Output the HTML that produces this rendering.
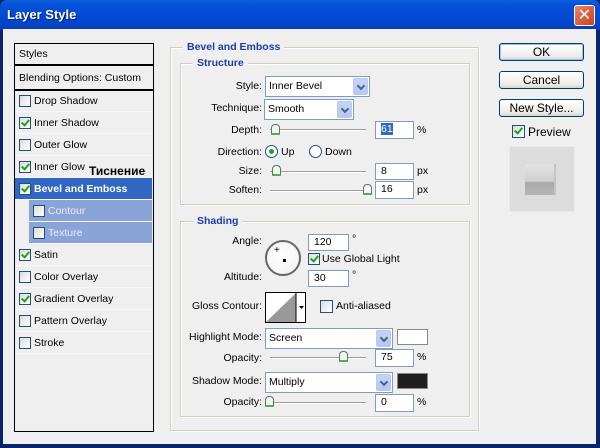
<!DOCTYPE html>
<html><head><meta charset="utf-8"><style>
*{margin:0;padding:0;box-sizing:border-box}
body{width:600px;height:448px;overflow:hidden;font:10.5px "Liberation Sans","DejaVu Sans",sans-serif;color:#000;background:#0a246a;position:relative}
.a{position:absolute}
.lbl{position:absolute;text-align:right;width:120px;white-space:nowrap;line-height:13px}
.t{position:absolute;white-space:nowrap;line-height:13px}
.inp{position:absolute;background:#fff;border:1px solid #7f9db9;padding-left:5px;line-height:15px;font-size:10.5px}
.sel{position:absolute;background:#fff;border:1px solid #7f9db9;padding-left:3px;font-size:10.5px}
.dd{position:absolute;right:1px;top:1px;bottom:1px;width:15px;background:linear-gradient(#c6d3f7,#b5c8f3);border:1px solid #b9c9ef;border-radius:2px}
.dd:after{content:"";position:absolute;left:4px;top:4px;width:4px;height:4px;border-right:2px solid #4d6185;border-bottom:2px solid #4d6185;transform:rotate(45deg)}
.track{position:absolute;height:2px;border-top:1px solid #9d9d9d;border-bottom:1px solid #fff}
.thumb{position:absolute;width:9px;height:11px;background:#f4f4f4;border:1px solid #5a7a5a;border-radius:4px 4px 1px 1px;border-bottom:2px solid #4bb34b}
.cb{position:absolute;width:12px;height:12px;border:1px solid #1c5180;background:linear-gradient(135deg,#dcdcd6,#fff)}
.ck:after{content:"";position:absolute;left:3px;top:0px;width:3px;height:6px;border-right:2px solid #21a121;border-bottom:2px solid #21a121;transform:rotate(40deg)}
.row{position:absolute;left:15px;width:137px;height:22px;border-bottom:1px solid #f8f8f8;}
.row .cb{left:4px;top:5px}
.row span{position:absolute;left:19px;top:5px;white-space:nowrap}
.gb{position:absolute;border:1px solid #d0d0bf;box-shadow:inset 1px 1px 0 #fff,1px 1px 0 #fff}
.gt{position:absolute;background:#efefef;color:#1c3ca6;font-weight:bold;padding:0 4px;line-height:13px}
.btn{position:absolute;left:499px;width:85px;height:18px;border:1px solid #003c74;border-radius:3px;background:linear-gradient(#fff,#ecebe6 80%,#d6d0c5);text-align:center;line-height:16px;font-size:12px}
</style></head><body>
<div class="a" style="left:0;top:0;width:600px;height:30px;background:linear-gradient(#0a5fdc,#0550d8 20%,#0047d0 70%,#0a3fae);border-radius:7px 7px 0 0"></div>
<div class="t" style="left:7px;top:8px;color:#fff;font-size:13px;font-weight:bold;text-shadow:1px 1px #0a1e6a">Layer Style</div>
<div class="a" style="left:574px;top:5px;width:21px;height:21px;border:1px solid #fff;border-radius:3px;background:linear-gradient(135deg,#e8866a,#c8401c);color:#fff;font-size:16px;font-weight:bold;text-align:center;line-height:19px">✕</div>
<div class="a" style="left:3px;top:29px;width:593px;height:415px;background:#efefef"></div>

<div class="a" style="left:14px;top:43px;width:140px;height:389px;border:1px solid #000;background:#efefef"></div>
<div class="t" style="left:19px;top:48px">Styles</div>
<div class="a" style="left:15px;top:64px;width:138px;height:2px;background:#000"></div>
<div class="t" style="left:19px;top:72px">Blending Options: Custom</div>
<div class="a" style="left:15px;top:89px;width:138px;height:2px;background:#000"></div>
<div class="row" style="top:90px"><div class="cb"></div><span>Drop Shadow</span></div>
<div class="row" style="top:112px"><div class="cb ck"></div><span>Inner Shadow</span></div>
<div class="row" style="top:134px"><div class="cb"></div><span>Outer Glow</span></div>
<div class="row" style="top:156px"><div class="cb ck"></div><span>Inner Glow</span></div>
<div class="t" style="left:89px;top:165px;font-weight:bold;font-size:12px">Тиснение</div>
<div class="row" style="top:178px;background:#3166c2;color:#fff;font-weight:bold"><div class="cb ck"></div><span>Bevel and Emboss</span></div>
<div class="row" style="top:200px;left:29px;width:123px;background:#8aa4d8;color:#e8eefa"><div class="cb"></div><span>Contour</span></div>
<div class="row" style="top:222px;left:29px;width:123px;background:#8aa4d8;color:#e8eefa"><div class="cb"></div><span>Texture</span></div>
<div class="row" style="top:244px"><div class="cb ck"></div><span>Satin</span></div>
<div class="row" style="top:266px"><div class="cb"></div><span>Color Overlay</span></div>
<div class="row" style="top:288px"><div class="cb ck"></div><span>Gradient Overlay</span></div>
<div class="row" style="top:310px"><div class="cb"></div><span>Pattern Overlay</span></div>
<div class="row" style="top:332px"><div class="cb"></div><span>Stroke</span></div>

<div class="gb" style="left:170px;top:47px;width:309px;height:384px"></div>
<div class="gt" style="left:183px;top:41px">Bevel and Emboss</div>
<div class="gb" style="left:180px;top:63px;width:290px;height:142px"></div>
<div class="gt" style="left:193px;top:57px">Structure</div>
<div class="gb" style="left:180px;top:221px;width:290px;height:196px"></div>
<div class="gt" style="left:193px;top:215px">Shading</div>

<div class="lbl" style="left:142px;top:80px">Style:</div>
<div class="sel" style="left:265px;top:76px;width:105px;height:21px;line-height:19px">Inner Bevel<div class="dd"></div></div>
<div class="lbl" style="left:142px;top:102px">Technique:</div>
<div class="sel" style="left:264px;top:99px;width:90px;height:21px;line-height:19px">Smooth<div class="dd"></div></div>
<div class="lbl" style="left:142px;top:124px">Depth:</div>
<div class="track" style="left:270px;top:129px;width:96px"></div>
<div class="thumb" style="left:271px;top:124px"></div>
<div class="inp" style="left:375px;top:121px;width:39px;height:18px"><span style="background:#316ac5;color:#fff">61</span></div>
<div class="t" style="left:417px;top:124px">%</div>
<div class="lbl" style="left:142px;top:146px">Direction:</div>
<div class="a" style="left:265px;top:145px;width:13px;height:13px;border:1px solid #1c5180;border-radius:50%;background:#fff"></div>
<div class="a" style="left:269px;top:149px;width:5px;height:5px;border-radius:50%;background:#21a121"></div>
<div class="t" style="left:281px;top:146px">Up</div>
<div class="a" style="left:309px;top:145px;width:13px;height:13px;border:1px solid #1c5180;border-radius:50%;background:#fff"></div>
<div class="t" style="left:325px;top:146px">Down</div>
<div class="lbl" style="left:142px;top:165px">Size:</div>
<div class="track" style="left:270px;top:171px;width:96px"></div>
<div class="thumb" style="left:272px;top:165px"></div>
<div class="inp" style="left:375px;top:163px;width:39px;height:17px">8</div>
<div class="t" style="left:417px;top:165px">px</div>
<div class="lbl" style="left:142px;top:184px">Soften:</div>
<div class="track" style="left:270px;top:190px;width:96px"></div>
<div class="thumb" style="left:363px;top:184px"></div>
<div class="inp" style="left:375px;top:181px;width:39px;height:18px">16</div>
<div class="t" style="left:417px;top:184px">px</div>

<div class="lbl" style="left:142px;top:235px">Angle:</div>
<div class="a" style="left:265px;top:240px;width:36px;height:36px;border:2px solid #666;border-radius:50%;background:radial-gradient(circle at 40% 40%,#fff,#f0f0f0)"></div>
<div class="a" style="left:283px;top:259px;width:3px;height:3px;background:#000"></div>
<div class="t" style="left:274px;top:244px;font-size:10px">+</div>
<div class="inp" style="left:308px;top:234px;width:41px;height:17px">120</div>
<div class="t" style="left:352px;top:233px">°</div>
<div class="cb ck" style="left:308px;top:253px;width:12px;height:12px"></div>
<div class="t" style="left:322px;top:253px">Use Global Light</div>
<div class="lbl" style="left:142px;top:271px">Altitude:</div>
<div class="inp" style="left:308px;top:270px;width:41px;height:17px">30</div>
<div class="t" style="left:352px;top:269px">°</div>
<div class="lbl" style="left:142px;top:300px">Gloss Contour:</div>
<div class="a" style="left:265px;top:292px;width:41px;height:31px;border:1px solid #000;background:#fff;overflow:hidden">
<svg width="39" height="29"><polygon points="0,29 30,0 30,29" fill="#999"/><line x1="30" y1="0" x2="30" y2="29" stroke="#000"/><polygon points="33,13 38,13 35.5,16" fill="#000"/></svg></div>
<div class="cb" style="left:320px;top:300px;width:13px;height:13px"></div>
<div class="t" style="left:336px;top:300px">Anti-aliased</div>
<div class="lbl" style="left:142px;top:331px">Highlight Mode:</div>
<div class="sel" style="left:265px;top:328px;width:128px;height:21px;line-height:19px">Screen<div class="dd"></div></div>
<div class="a" style="left:397px;top:329px;width:31px;height:16px;background:#fff;border:1px solid #888"></div>
<div class="lbl" style="left:142px;top:352px">Opacity:</div>
<div class="track" style="left:270px;top:357px;width:96px"></div>
<div class="thumb" style="left:339px;top:351px"></div>
<div class="inp" style="left:375px;top:349px;width:39px;height:18px">75</div>
<div class="t" style="left:417px;top:351px">%</div>
<div class="lbl" style="left:142px;top:375px">Shadow Mode:</div>
<div class="sel" style="left:265px;top:372px;width:128px;height:21px;line-height:19px">Multiply<div class="dd"></div></div>
<div class="a" style="left:397px;top:373px;width:31px;height:16px;background:#1e1e1e;border:1px solid #888"></div>
<div class="lbl" style="left:142px;top:396px">Opacity:</div>
<div class="track" style="left:270px;top:402px;width:96px"></div>
<div class="thumb" style="left:265px;top:396px"></div>
<div class="inp" style="left:375px;top:394px;width:39px;height:18px">0</div>
<div class="t" style="left:417px;top:396px">%</div>

<div class="btn" style="top:43px;box-shadow:inset 0 0 0 1px #9fc1f0">OK</div>
<div class="btn" style="top:71px">Cancel</div>
<div class="btn" style="top:99px">New Style...</div>
<div class="cb ck" style="left:512px;top:125px;width:13px;height:13px"></div>
<div class="t" style="left:528px;top:126px;font-size:12px">Preview</div>
<div class="a" style="left:509px;top:146px;width:66px;height:66px;background:#dcdcdc;border:1px solid #eaeaea"></div>
<div class="a" style="left:525px;top:164px;width:31px;height:31px;background:linear-gradient(#e2e2e2,#d0d0d0 55%,#a9a9a9 60%,#b5b5b5);border-right:2px solid #c4c4c4"></div>
</body></html>
